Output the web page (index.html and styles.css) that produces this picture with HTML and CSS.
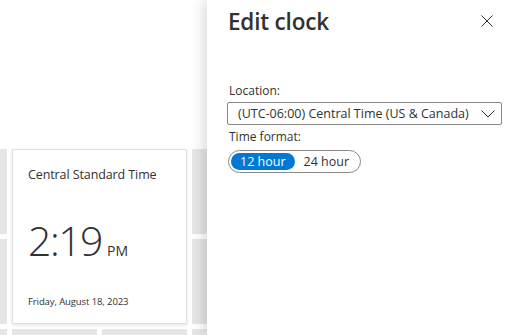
FILE: index.html
```html
<!DOCTYPE html>
<html>
<head>
<meta charset="utf-8">
<link rel="stylesheet" href="styles.css">
</head>
<body>
<div class="page">
  <div class="grid">
    <div class="tile"></div>
    <div class="card">
      <div class="zone">Central Standard Time</div>
      <div class="time"><span class="hm">2:19</span><span class="ampm">PM</span></div>
      <div class="date">Friday, August 18, 2023</div>
    </div>
    <div class="tile"></div>
    <div class="tile"></div>
    <div class="tile"></div>
    <div class="tile"></div>
    <div class="tile"></div>
    <div class="tile"></div>
    <div class="tile"></div>
    <div class="tile"></div>
    <div class="tile"></div>
    <div class="tile"></div>
    <div class="tile"></div>
    <div class="tile"></div>
    <div class="tile"></div>
    <div class="tile"></div>
    <div class="tile"></div>
  </div>
  <aside class="panel">
    <div class="panel-head">
      <h1 class="title">Edit clock</h1>
      <svg class="close" width="12" height="12" viewBox="0 0 12 12"><path d="M0.5 0.5 L11.5 11.5 M11.5 0.5 L0.5 11.5" stroke="#323130" stroke-width="1" fill="none"/></svg>
    </div>
    <div class="field loc">
      <div class="label">Location:</div>
      <div class="select">
        <span>(UTC-06:00) Central Time (US &amp; Canada)</span>
        <svg width="14" height="8" viewBox="0 0 14 8"><path d="M0.5 0.5 L7 7 L13.5 0.5" stroke="#323130" stroke-width="1" fill="none"/></svg>
      </div>
    </div>
    <div class="field fmt">
      <div class="label">Time format:</div>
      <div class="toggle">
        <span class="opt on">12 hour</span>
        <span class="opt">24 hour</span>
      </div>
    </div>
  </aside>
</div>
</body>
</html>
```
FILE: styles.css
```css
html, body {
  margin: 0;
  padding: 0;
  background: #fff;
  overflow: hidden;
}
body {
  width: 512px;
  height: 335px;
  font-family: "Open Sans", "Noto Sans", sans-serif;
  color: #323130;
}
.page {
  position: relative;
  width: 512px;
  height: 335px;
  overflow: hidden;
}
.grid {
  display: grid;
  grid-template-columns: repeat(5, 85px);
  grid-auto-rows: 85px;
  gap: 5px;
  padding-top: 149px;
  margin-left: -78px;
}
.tile {
  background: #e6e6e6;
}
.card {
  grid-column: 2 / span 2;
  grid-row: 1 / span 2;
  background: #fff;
  border: 1px solid #e1e1e1;
  box-shadow: 0 1px 3px rgba(0,0,0,0.12);
  box-sizing: border-box;
  padding: 16px 15px 0 15px;
  display: flex;
  flex-direction: column;
}
.zone {
  font-size: 12.5px;
  line-height: 17px;
  letter-spacing: -0.1px;
}
.time {
  margin-top: 35px;
  display: flex;
  align-items: baseline;
  line-height: 44px;
}
.hm {
  font-size: 41px;
  font-weight: 300;
  letter-spacing: -1.5px;
}
.ampm {
  font-size: 14px;
  margin-left: 5px;
}
.date {
  margin-top: 22px;
  font-size: 9.5px;
  letter-spacing: -0.1px;
}
.panel {
  position: absolute;
  top: 0;
  left: 207px;
  width: 305px;
  height: 335px;
  background: #fff;
  box-shadow: -4px 0 12px rgba(0,0,0,0.14);
  box-sizing: border-box;
  padding: 0 10px 0 20px;
}
.panel-head {
  display: flex;
  justify-content: space-between;
  align-items: center;
  height: 42px;
  padding-left: 1px;
}
.title {
  margin: 0;
  font-size: 22.5px;
  font-weight: 600;
  letter-spacing: -0.2px;
}
.close {
  margin-right: 9px;
}
.field {
  display: flex;
  flex-direction: column;
}
.loc {
  margin-top: 40px;
}
.fmt {
  margin-top: 3px;
}
.label {
  font-size: 12px;
  line-height: 18px;
  padding-left: 2px;
}
.select {
  margin-top: 2px;
  height: 23px;
  border: 1px solid #8a8886;
  border-radius: 2px;
  box-sizing: border-box;
  display: flex;
  align-items: center;
  justify-content: space-between;
  padding: 0 6px 0 10px;
  font-size: 12.5px;
}
.toggle {
  margin-top: 4px;
  align-self: flex-start;
  display: flex;
  align-items: center;
  border: 1px solid #8a8886;
  border-radius: 12px;
  padding: 2px;
  margin-left: 1px;
  height: 23px;
  box-sizing: border-box;
}
.opt {
  font-size: 12.5px;
  line-height: 17px;
  padding: 0 9px;
  border-radius: 9px;
}
.opt.on {
  background: #0078d4;
  color: #fff;
  padding: 0 9px;
}
```
